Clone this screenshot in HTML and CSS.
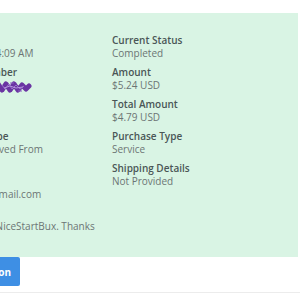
FILE: index.html
```html
<!DOCTYPE html>
<html lang="en">
<head>
    <meta charset="UTF-8">
    <meta name="viewport" content="width=device-width, initial-scale=1.0">
    <title>Transaction Details</title>
    <link rel="stylesheet" href="styles.css">
</head>
<body>
    <div class="page">
        <!-- Transaction summary -->
        <div class="details">
            <div class="col">
                <div class="field">
                    <div class="label">Date</div>
                    <div class="value">14/05/2019 4:09 AM</div>
                </div>
                <div class="field">
                    <div class="label">Invoice Number</div>
                    <div class="value">
                        <!-- redacted number -->
                        <svg class="scribble" width="92" height="13" viewBox="0 0 92 13">
                            <path d="M2 5 L6 10 L10 4 L14 10 L18 4 L22 10 L26 4 L30 10 L34 4 L38 10 L42 4 L46 10 L50 4 L54 10 L58 4 L62 10 L66 4 L70 10 L74 4 L78 10 L82 5 L86 9 L89 6" stroke="#6a34a2" stroke-width="5" fill="none" stroke-linejoin="round" stroke-linecap="round"/>
                            <path d="M62 5 L65 9 L69 4 L72 9 L76 5 L80 9 L84 6" stroke="#9a72cc" stroke-width="1" fill="none"/>
                            <path d="M64 8 L70 6 L76 8 L83 7" stroke="#b394dc" stroke-width="1" fill="none"/>
                            <path d="M70 3 L74 3 M78 11 L82 11" stroke="#8a5cc0" stroke-width="1" fill="none"/>
                        </svg>
                    </div>
                </div>
                <div class="field">
                    <div class="label">&nbsp;</div>
                    <div class="value">&nbsp;</div>
                </div>
                <div class="field">
                    <div class="label">Payment Type</div>
                    <div class="value">Money Received From<br>PayPal</div>
                </div>
                <div class="field">
                    <div class="label">Email</div>
                    <div class="value">customer@gmail.com</div>
                </div>
                <div class="field">
                    <div class="label">Note</div>
                    <div class="value">Order from NiceStartBux. Thanks</div>
                </div>
            </div>
            <div class="col">
                <div class="field">
                    <div class="label">Current Status</div>
                    <div class="value">Completed</div>
                </div>
                <div class="field">
                    <div class="label">Amount</div>
                    <div class="value">$5.24 USD</div>
                </div>
                <div class="field">
                    <div class="label">Total Amount</div>
                    <div class="value">$4.79 USD</div>
                </div>
                <div class="field">
                    <div class="label">Purchase Type</div>
                    <div class="value">Service</div>
                </div>
                <div class="field">
                    <div class="label">Shipping Details</div>
                    <div class="value">Not Provided</div>
                </div>
            </div>
        </div>

        <!-- Actions -->
        <div class="actions">
            <button class="btn">View Transaction</button>
        </div>
    </div>
</body>
</html>
```

FILE: styles.css
```css
body {
    margin: 0;
    font-family: "Open Sans", Arial, sans-serif;
    font-size: 10px;
    background: #fff;
    overflow: hidden;
}
.page {
    padding-top: 13px;
    border-bottom: 1px solid #ececec;
    padding-bottom: 6px;
    width: 300px;
}
.details {
    display: grid;
    grid-template-columns: 160px 166px;
    column-gap: 12px;
    margin-left: -80px;
    width: 358px;
    padding: 21px 0 24px 20px;
    background: #d9f4e4;
}
.field {
    margin-bottom: 6px;
    line-height: 13px;
}
.field:last-child {
    margin-bottom: 0;
}
.label {
    font-weight: 600;
    color: #4a5656;
    white-space: nowrap;
}
.value {
    color: #6c7474;
    white-space: nowrap;
}
.scribble {
    display: block;
    margin-top: 1px;
    margin-bottom: -1px;
}
.actions {
    display: flex;
    justify-content: flex-end;
    width: 100px;
    margin-left: -80px;
}
.btn {
    flex-shrink: 0;
    white-space: nowrap;
    background: #3e8fe4;
    color: #fff;
    border: none;
    font-family: "Open Sans", Arial, sans-serif;
    font-size: 10px;
    font-weight: 700;
    height: 29px;
    padding: 0 9px 0 12px;
    border-radius: 0 2px 2px 0;
}
```
